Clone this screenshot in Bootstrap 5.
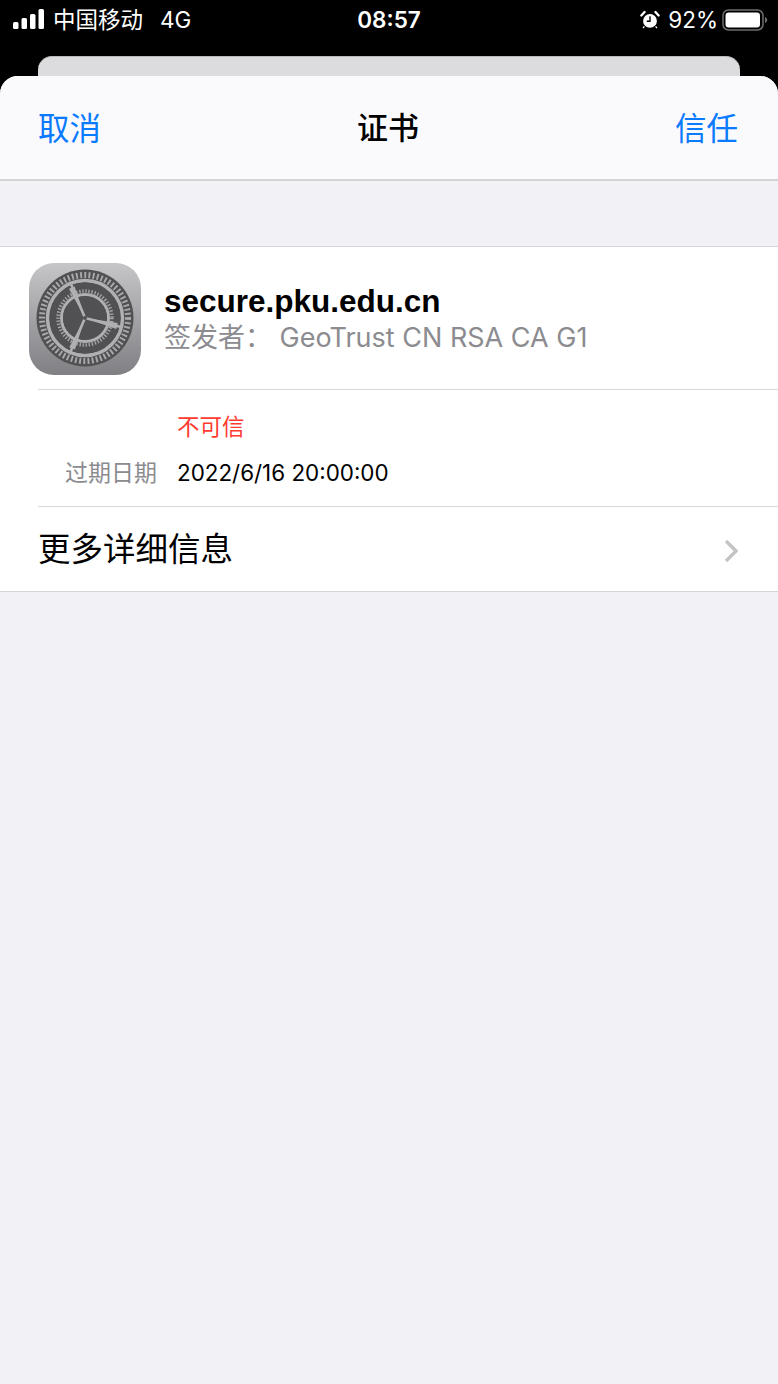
<!DOCTYPE html>
<html lang="zh-CN">
<head>
  <meta charset="UTF-8" />
  <meta name="viewport" content="width=device-width, initial-scale=1.0" />
  <title>证书</title>
  <link href="https://cdn.jsdelivr.net/npm/bootstrap@5.3.0/dist/css/bootstrap.min.css" rel="stylesheet">
  <style>
    html, body { height: 100%; }
    body { background: #000; font-family: Inter, "Noto Sans CJK SC", sans-serif; overflow: hidden; }
    .status-bar { height: 56px; padding: 0 10px 0 13px; color: #fff; font-size: 22.5px; line-height: 40px; }
    .status-side { width: 300px; height: 40px; }
    .status-net { margin-left: 17px; }
    .status-time { font-size: 22.5px; font-weight: 600; margin-right: 3px; }
    .back-sheet { height: 20px; margin: 0 38px; background: #dcdbdd; border-radius: 14px 14px 0 0; border-top: 1px solid #bbb; }
    .sheet { height: 1308px; background: #f1f1f6; border-radius: 18px 18px 0 0; overflow: hidden; }
    .sheet-head { height: 105px; padding: 2px 40px 0 38px; background: #fafafc; border-bottom: 2px solid #d4d4d6; }
    .head-btn { padding: 0; border: 0; background: none; color: #0a7aff; font-size: 31.5px; line-height: 100px; }
    .head-title { font-size: 31px; font-weight: 500; color: #000; }
    .cert-card { margin-top: 65px; background: #fff; border-top: 1px solid #d6d6da; border-bottom: 1px solid #d6d6da; }
    .cert-top { height: 142px; padding: 16px 0 0 29px; }
    .cert-icon { width: 112px; height: 112px; flex: none; }
    .cert-name { font-family: "Liberation Sans", sans-serif; font-size: 31.5px; font-weight: 700; line-height: 37px; color: #000; }
    .cert-issuer { font-size: 27px; line-height: 36px; color: #8b8b90; white-space: nowrap; }
    .cert-text { margin: 20px 0 0 23px; }
    .rule-row { margin-left: 38px; border-top: 1px solid #d9d9dc; }
    .cert-facts { height: 117px; padding-top: 14px; }
    .fact-row { height: 46px; }
    .fact-label { width: 119px; margin-right: 20px; text-align: right; font-size: 23px; color: #8b8b90; }
    .fact-bad { color: #ff3b30; font-size: 22.5px; }
    .fact-value { color: #000; font-size: 22.4px; }
    .more-row { height: 85px; padding: 3px 40px 0 0; color: #000; font-size: 32.5px; }
  </style>
</head>
<body>
  <div class="status-bar d-flex justify-content-between">
    <div class="status-side d-flex align-items-center">
      <svg width="32" height="24" viewBox="0 0 32 24" class="me-2 flex-shrink-0" fill="#fff">
        <rect x="0" y="14" width="5.5" height="7" rx="1.5"/>
        <rect x="8.5" y="10" width="5.5" height="11" rx="1.5"/>
        <rect x="17" y="6" width="5.5" height="15" rx="1.5"/>
        <rect x="25.5" y="1" width="5.5" height="20" rx="1.5"/>
      </svg>
      <span>中国移动</span><span class="status-net">4G</span>
    </div>
    <div class="status-time">08:57</div>
    <div class="status-side d-flex align-items-center justify-content-end">
      <svg width="20" height="20" viewBox="0 0 22 22" class="me-2">
        <circle cx="11" cy="12" r="7.6" fill="#fff"/>
        <path d="M1.5 6 5 2.2M20.5 6 17 2.2" stroke="#fff" stroke-width="2.6" stroke-linecap="round"/>
        <path d="M4.8 18 3.4 20M17.2 18l1.4 2" stroke="#fff" stroke-width="1.4"/>
        <path d="M11 7v5.4H7.4" fill="none" stroke="#000" stroke-width="1.5"/>
      </svg>
      <span>92%</span>
      <svg width="46" height="22" viewBox="0 0 46 22" class="ms-1">
        <rect x="1" y="1" width="40" height="20" rx="5.5" fill="none" stroke="#6e6e6e" stroke-width="1.5"/>
        <rect x="3.5" y="3.5" width="34.5" height="15" rx="3.2" fill="#fff"/>
        <path d="M43 8v6c1.4-.5 2.2-1.6 2.2-3S44.400 8.500 43 8z" fill="#6e6e6e"/>
      </svg>
    </div>
  </div>

  <div class="back-sheet"></div>

  <main class="sheet">
    <header class="sheet-head d-flex justify-content-between align-items-center">
      <button type="button" class="head-btn">取消</button>
      <div class="head-title">证书</div>
      <button type="button" class="head-btn">信任</button>
    </header>

    <section class="cert-card">
      <div class="cert-top d-flex">
        <svg class="cert-icon" viewBox="0 0 112 112">
          <defs>
            <linearGradient id="iconBg" x1="0" y1="0" x2="0" y2="1">
              <stop offset="0" stop-color="#c6c6c9"/>
              <stop offset="1" stop-color="#808084"/>
            </linearGradient>
          </defs>
          <rect width="112" height="112" rx="25" fill="url(#iconBg)"/>
          <circle cx="56" cy="55" r="48.500" fill="#515153"/>
          <circle cx="56" cy="55" r="43" fill="none" stroke="#a9a9ac" stroke-width="6" stroke-dasharray="1.900 2.300"/>
          <circle cx="56" cy="55" r="37.500" fill="none" stroke="#b0b0b3" stroke-width="3.500"/>
          <circle cx="56" cy="55" r="29.500" fill="none" stroke="#515153" stroke-width="12"/>
          <circle cx="56" cy="55" r="27" fill="none" stroke="#a9a9ac" stroke-width="3.500" stroke-dasharray="1.300 1.800"/>
          <circle cx="56" cy="55" r="23.500" fill="none" stroke="#b0b0b3" stroke-width="3"/>
          <circle cx="56" cy="55" r="22" fill="#515153"/>
          <path d="M56 55 42 21M56 55 92 64M56 55 41 90" stroke="#b0b0b3" stroke-width="2.600" stroke-linecap="round"/>
          <path d="M56 55 45.600 23.400 40 25.800ZM56 55 87.300 65.900 88.700 60.100ZM56 55 45.900 86.600 40.300 84.200Z" fill="#b0b0b3"/>
          <circle cx="56" cy="55" r="2" fill="#515153"/>
        </svg>
        <div class="cert-text">
          <div class="cert-name">secure.pku.edu.cn</div>
          <div class="cert-issuer">签发者： GeoTrust CN RSA CA G1</div>
        </div>
      </div>

      <div class="rule-row cert-facts">
        <div class="fact-row d-flex align-items-center">
          <div class="fact-label"></div>
          <div class="fact-bad">不可信</div>
        </div>
        <div class="fact-row d-flex align-items-center">
          <div class="fact-label">过期日期</div>
          <div class="fact-value">2022/6/16 20:00:00</div>
        </div>
      </div>

      <div class="rule-row more-row d-flex justify-content-between align-items-center">
        <span>更多详细信息</span>
        <svg width="14" height="24" viewBox="0 0 14 24">
          <path d="M2 2l10 10L2 22" fill="none" stroke="#c4c4c7" stroke-width="3.400"/>
        </svg>
      </div>
    </section>
  </main>
  <script src="https://cdn.jsdelivr.net/npm/bootstrap@5.3.0/dist/js/bootstrap.bundle.min.js"></script>
</body>
</html>
